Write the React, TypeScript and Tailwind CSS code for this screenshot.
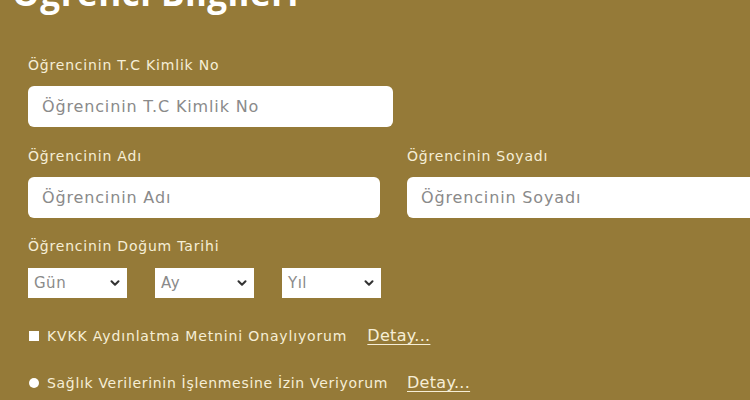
import { ChevronDown } from 'lucide-react'

const body = { fontFamily: '"DejaVu Sans", "Liberation Sans", sans-serif' }
const title = { fontFamily: '"Open Sans", "Liberation Sans", sans-serif' }

function Field({ label, className = '' }: { label: string; className?: string }) {
  return (
    <div className={`shrink-0 ${className}`}>
      <div className="text-[14px] leading-[20px] tracking-[0.8px] text-[#f6eed6]">{label}</div>
      <input
        placeholder={label}
        className="mt-[11px] h-[41px] w-full rounded-[6px] bg-white px-[14px] text-[16px] tracking-[0.85px] text-[#444] placeholder:text-[#8a8a8a] outline-none"
      />
    </div>
  )
}

function Select({ label }: { label: string }) {
  return (
    <div className="flex h-[30px] w-[99px] shrink-0 items-center justify-between bg-white pl-[6px] pr-[5px] text-[15px] tracking-[0.5px] text-[#8a8a8a]">
      <span>{label}</span>
      <ChevronDown className="h-[14px] w-[14px] text-[#333]" strokeWidth={3.5} />
    </div>
  )
}

export default function App() {
  return (
    <div className="h-[400px] w-[750px] overflow-hidden bg-[#957a38]" style={body}>
      <h1
        className="mt-[-27px] ml-[12px] text-[35px] font-bold leading-[40px] text-white tracking-[0.5px]"
        style={title}
      >
        Öğrenci Bilgileri
      </h1>

      <div className="pl-[28px] pt-[42px]">
        <Field label="Öğrencinin T.C Kimlik No" className="w-[365px]" />

        <div className="mt-[19px] flex gap-[27px]">
          <Field label="Öğrencinin Adı" className="w-[352px]" />
          <Field label="Öğrencinin Soyadı" className="w-[360px]" />
        </div>

        <div className="mt-[18px] text-[14px] leading-[20px] tracking-[0.8px] text-[#f6eed6]">
          Öğrencinin Doğum Tarihi
        </div>
        <div className="mt-[12px] flex gap-[28px]">
          <Select label="Gün" />
          <Select label="Ay" />
          <Select label="Yıl" />
        </div>

        <div className="mt-[26px] flex items-center text-[14px] tracking-[0.85px] text-[#f6eed6]">
          <span className="ml-[1px] mr-[8px] h-[10px] w-[10px] shrink-0 bg-white" />
          <span>KVKK Aydınlatma Metnini Onaylıyorum</span>
          <span className="ml-[20px] text-[16px] tracking-[0.3px] underline underline-offset-[3px]">Detay...</span>
        </div>

        <div className="mt-[23px] flex items-center text-[14px] tracking-[0.68px] text-[#f6eed6]">
          <span className="ml-[1px] mr-[8px] h-[10px] w-[10px] shrink-0 rounded-full bg-white" />
          <span>Sağlık Verilerinin İşlenmesine İzin Veriyorum</span>
          <span className="ml-[19px] text-[16px] tracking-[0.3px] underline underline-offset-[3px]">Detay...</span>
        </div>
      </div>
    </div>
  )
}
